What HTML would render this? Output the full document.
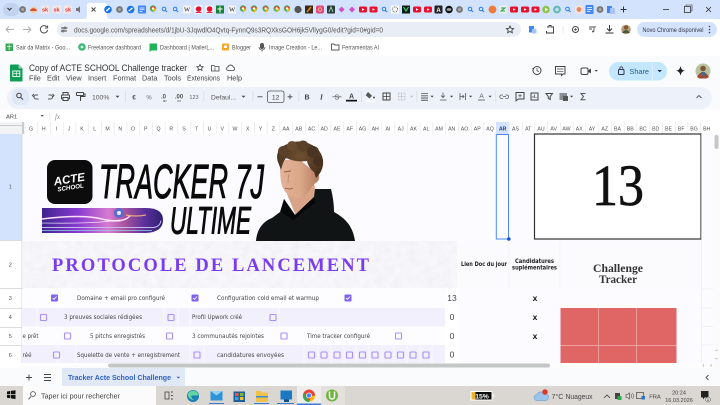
<!DOCTYPE html>
<html lang="fr"><head><meta charset="utf-8"><title>Copy of ACTE SCHOOL Challenge tracker</title>
<style>
html,body{margin:0;padding:0;width:720px;height:405px;overflow:hidden;background:#fff}
svg{display:block;filter:blur(.35px)}
text{font-family:"Liberation Sans",sans-serif}
.ch{font-size:5.2px;fill:#555;text-anchor:middle}
.m{font-size:7.3px;fill:#444}
.t{font-family:"DejaVu Sans","Liberation Sans",sans-serif;font-size:6.4px;fill:#444}
.b{font-size:6.8px;fill:#555}
.cb{fill:none;stroke:#a98ffa;stroke-width:1.1}
.ic{fill:none;stroke:#444;stroke-width:1}
.ig{fill:none;stroke:#666;stroke-width:1}
.hd{font-family:"DejaVu Sans","Liberation Sans",sans-serif;fill:#222;font-size:5.8px;font-weight:bold}
.se{font-family:"Liberation Serif",serif}
</style></head><body>
<svg width="720" height="405" viewBox="0 0 720 405" xmlns="http://www.w3.org/2000/svg">
<defs>
<g id="yt"><rect x="-4" y="-3" width="8" height="6" rx="1.5" fill="#e8112d"/><path d="M-1-1.3 1.600 0-1 1.300z" fill="#fff"/></g>
<g id="mp"><circle cy="-1" r="3.200" fill="#4caf50"/><path d="M-3-1a3.200 3.200 0 0 1 6 0z" fill="#ea4335"/><path d="M0-1 3-1 0 4z" fill="#fbbc04"/><circle cy="-1" r="1.200" fill="#fff"/></g>
<g id="se"><circle cx="-.5" cy="-.5" r="1.800" fill="none" stroke="#1a73e8" stroke-width=".9"/><path d="M1 1 2.600 2.600" stroke="#1a73e8" stroke-width=".9"/></g>
<g id="gl"><circle r="3.400" fill="#777"/><circle r="1.500" fill="#aaa"/></g>
<g id="sk"><rect x="-4" y="-4" width="8" height="8" fill="#f5e6e6"/><text x="0" y="2" font-size="5.500" font-weight="bold" fill="#d33" text-anchor="middle">sk</text></g>
<g id="gm"><rect x="-4" y="-4" width="8" height="8" fill="#fff"/><circle cy="-.5" r="2.800" fill="#e8112d"/><rect x="-3" y="2.400" width="6" height="1" fill="#e8112d"/></g>
<g id="bl"><circle r="3.800" fill="#1a73e8"/><path d="M-1.800 1.600 1.800-1.600" stroke="#fff" stroke-width="1.400"/></g>
<g id="w"><rect x="-4" y="-4" width="8" height="8" fill="#f3f3f3"/><text x="0" y="2.200" font-size="6.500" class="se" fill="#222" text-anchor="middle">W</text></g>
<pattern id="cols" x="24.600" y="0" width="12.750" height="400" patternUnits="userSpaceOnUse"><rect width=".6" height="400" fill="#dfe1e5"/></pattern>
<linearGradient id="cm" x1="0" x2="1" y1="0" y2="0"><stop offset="0" stop-color="#3d2590"/><stop offset=".3" stop-color="#8a3bd0"/><stop offset=".55" stop-color="#d77bd0"/><stop offset=".68" stop-color="#a9549f"/><stop offset=".85" stop-color="#5a2f9c"/><stop offset="1" stop-color="#2e2170"/></linearGradient>
<linearGradient id="face" x1="0" x2="1" y1="0" y2="0"><stop offset="0" stop-color="#e2b297"/><stop offset=".5" stop-color="#dca88a"/><stop offset="1" stop-color="#b57b60"/></linearGradient>
<radialGradient id="hairg" cx=".5" cy=".4" r=".7"><stop offset="0" stop-color="#6f4f30"/><stop offset="1" stop-color="#3f2c1c"/></radialGradient>
<filter id="paper" x="0" y="0" width="100%" height="100%"><feTurbulence type="fractalNoise" baseFrequency=".12" numOctaves="3" seed="4"/><feColorMatrix values=".12 0 0 0 .85  .12 0 0 0 .85  .08 0 0 0 .91  0 0 0 0 1"/></filter>
<g id="chk"><rect x="-3.500" y="-3.500" width="7" height="7" rx="1" fill="#7f62f0"/><path d="M-1.900 0-.5 1.400 2-1.500" stroke="#fff" stroke-width=".9" fill="none"/></g>
<g id="cbx"><rect x="-3" y="-3" width="6" height="6" rx=".8" class="cb"/></g>
</defs>

<!-- Tab strip -->
<rect width="720" height="19" fill="#d3e3fd"/>
<rect x="3" y="3" width="16" height="13" rx="6" fill="#c2d3f0"/>
<path d="M7.500 8l2 2 2-2" fill="none" stroke="#333" stroke-width="1.100"/>
<path d="M84 19q3 0 3-3V6q0-3 3-3h14q3 0 3 3v10q0 3 3 3z" fill="#fff"/>
<path d="M91.500 7.500l4 4M95.500 7.500l-4 4" stroke="#444" stroke-width="1"/>
<use href="#gl" x="22.600" y="9.500"/>
<circle cx="33.600" cy="10" r="3.400" fill="#f0c9a0"/><path d="M30 11a3.600 3.600 0 0 1 7 0z" fill="#d9502e"/>
<use href="#sk" x="45" y="9.500"/><use href="#sk" x="56.500" y="9.500"/><use href="#sk" x="68" y="9.500"/>
<path d="M76 8h2l2-2v7l-2-2h-2z" fill="#777"/>
<use href="#bl" x="108" y="9.500"/><use href="#gl" x="119.500" y="9.500"/><use href="#bl" x="130.600" y="9.500"/>
<rect x="138" y="5.500" width="8" height="8" rx="1" fill="#4285f4"/><path d="M139.500 8h5M139.500 9.700h5M139.500 11.400h3" stroke="#fff" stroke-width=".7"/>
<use href="#mp" x="153" y="9.500"/><use href="#se" x="164.500" y="9.500"/><use href="#se" x="175.600" y="9.500"/>
<use href="#w" x="187" y="9.500"/><use href="#gm" x="198.600" y="9.500"/><use href="#gm" x="209.600" y="9.500"/>
<rect x="216" y="5.500" width="8" height="8" fill="#188038"/><path d="M220 6.500v6M217.500 9h5" stroke="#fff" stroke-width="1"/>
<use href="#w" x="232" y="9.500"/><use href="#mp" x="243" y="9.500"/><use href="#mp" x="254" y="9.500"/><use href="#mp" x="265.600" y="9.500"/><use href="#mp" x="276.700" y="9.500"/><use href="#mp" x="287" y="9.500"/>
<circle cx="298" cy="9.500" r="3.600" fill="#555"/>
<rect x="305" y="5.500" width="8" height="8" fill="#3a2a14"/><path d="M307 12l4-5" stroke="#d18a2a" stroke-width="1.500"/>
<rect x="316" y="5.500" width="8" height="8" rx="2" fill="#e1457f"/><circle cx="320" cy="9.500" r="1.800" fill="none" stroke="#ffd28a" stroke-width=".8"/>
<rect x="327" y="5.500" width="8" height="8" rx="1" fill="#2d3a35"/><path d="M329 12l2-5 2 5" fill="none" stroke="#9fe3c2" stroke-width=".9"/>
<path d="M341.600 6.500l3 3-3 3-3-3z" fill="#d24fd0"/><path d="M352 6.500l3 3-3 3-3-3z" fill="#d24fd0"/>
<use href="#yt" x="363" y="9.500"/><use href="#yt" x="373.500" y="9.500"/><use href="#se" x="384.500" y="9.500"/>
<rect x="391" y="5.500" width="8" height="8" fill="#fff"/><circle cx="395" cy="9.500" r="2.600" fill="none" stroke="#666" stroke-width="1" stroke-dasharray="1 .8"/>
<rect x="402" y="5.500" width="8" height="8" fill="#0c1f17"/><path d="M403.500 7l2.500 4 2.500-4" fill="none" stroke="#3ddc84" stroke-width="1"/>
<use href="#yt" x="417" y="9.500"/><use href="#yt" x="428" y="9.500"/>
<rect x="434.500" y="5.500" width="8" height="8" rx="1" fill="#222"/><text x="438.500" y="11.800" font-size="6" font-weight="bold" fill="#fff" text-anchor="middle">A</text>
<circle cx="449" cy="9.500" r="3.800" fill="#111"/><ellipse cx="449" cy="9.500" rx="2.400" ry="1.400" fill="#aaa"/>
<use href="#gl" x="459.500" y="9.500"/><use href="#se" x="470.500" y="9.500"/><use href="#se" x="481.500" y="9.500"/>
<circle cx="492.500" cy="9.500" r="3.900" fill="#ee7a3c"/>
<rect x="499" y="5.500" width="8" height="8" fill="#e7f3ea"/><path d="M501 8h4l-4 3h4" fill="none" stroke="#2e9b4f" stroke-width="1"/>
<use href="#yt" x="514" y="9.500"/><use href="#yt" x="525" y="9.500"/><use href="#yt" x="535.500" y="9.500"/>
<circle cx="546" cy="9.500" r="3.800" fill="#8bc34a"/><path d="M545 7.500l3 2-3 2z" fill="#fff"/>
<circle cx="557" cy="9.500" r="3.900" fill="#66b8b8"/><circle cx="557" cy="9.500" r="1.800" fill="#bfe6e6"/>
<use href="#se" x="568" y="9.500"/>
<rect x="575" y="5.500" width="8" height="8" fill="#f6e2d8"/><circle cx="579" cy="9.500" r="2.400" fill="#e08a6a"/>
<rect x="585.500" y="5" width="8" height="9" rx="1" fill="#4285f4"/><path d="M587 7.500h5M587 9.500h5M587 11.500h3.500" stroke="#fff" stroke-width=".8"/>
<use href="#gl" x="600" y="9.500"/>
<rect x="607" y="6" width="5" height="7" rx=".5" fill="#4285f4"/><rect x="610" y="8" width="5" height="6" rx=".5" fill="#a9c5f5"/>
<path d="M620.500 9.500h6M623.500 6.500v6" stroke="#333" stroke-width="1"/>
<path d="M663 9.500h6" stroke="#333" stroke-width=".8"/>
<rect x="684.500" y="6.500" width="6" height="6" fill="none" stroke="#333" stroke-width=".8"/><path d="M686 6V5h6v6h-1" fill="none" stroke="#333" stroke-width=".6"/>
<path d="M706 7l5 5M711 7l-5 5" stroke="#333" stroke-width=".8"/>

<!-- Address bar -->
<rect y="19" width="720" height="19" fill="#fff"/>
<path d="M6 29.500h8M6 29.500l3-3M6 29.500l3 3" style="stroke:#b0b0b0;fill:none"/>
<path d="M31 29.500h-8M31 29.500l-3-3M31 29.500l-3 3" style="stroke:#b0b0b0;fill:none"/>
<path d="M47 27a3.700 3.700 0 1 0 .7 3M47.600 25.500V28h-2.500" fill="none" stroke="#555" stroke-width="1"/>
<rect x="57" y="22" width="464" height="15" rx="7.500" fill="#e9eef6"/>
<path d="M61 28h3M66 28h1.500M61 31h1M64 31h3" stroke="#444" stroke-width="1"/><circle cx="65" cy="28" r="1" fill="none" stroke="#444" stroke-width=".7"/><circle cx="63" cy="31" r="1" fill="none" stroke="#444" stroke-width=".7"/>
<text x="74" y="32.500" font-size="7.600" fill="#555" textLength="309" lengthAdjust="spacingAndGlyphs">docs.google.com/spreadsheets/d/1jbU-3JqwdlO4Qvtq-FynnQ9s3RQXksGOH6jk5VllygG0/edit?gid=0#gid=0</text>
<path d="M510 26l1.100 2.300 2.500.3-1.800 1.700.5 2.500-2.300-1.300-2.300 1.300.5-2.500-1.800-1.700 2.500-.3z" fill="none" stroke="#444" stroke-width=".9"/>
<rect x="529" y="26" width="5" height="6.500" rx=".5" fill="#4285f4"/><rect x="532" y="29" width="4.500" height="4.500" rx=".5" fill="#a9c5f5"/>
<path d="M547 27h2v-1.500h2V27h2.500v6h-7v-2" fill="none" stroke="#333" stroke-width=".9"/>
<path d="M563 26v7" stroke="#dfe3ea" stroke-width=".8"/>
<circle cx="575.500" cy="29.500" r="3" class="ic"/><path d="M575.500 28v3M574 29.500h3" stroke="#444" stroke-width=".7"/>
<path d="M589 27h5M589 29h3" stroke="#555" stroke-width="1.100"/><path d="M594 31.500V27l2-.3" fill="none" stroke="#555" stroke-width=".9"/><circle cx="593" cy="31.500" r="1" fill="#555"/>
<path d="M609.500 25v5.500M607 28.500l2.500 2.500 2.500-2.500M605.500 33h8" fill="none" stroke="#333" stroke-width="1"/>
<circle cx="626" cy="29.500" r="4.800" fill="#b89a75"/><path d="M622 33q4-6 8 0z" fill="#3f5b3a"/><circle cx="626" cy="27.500" r="2" fill="#7b5534"/>
<rect x="637" y="22" width="80" height="15" rx="7.500" fill="#d3e3fd"/>
<text x="642.500" y="32" font-size="6.800" fill="#334" textLength="61" lengthAdjust="spacingAndGlyphs">Novo Chrome disponível</text>
<circle cx="709.500" cy="26.500" r=".8" fill="#444"/><circle cx="709.500" cy="29.500" r=".8" fill="#444"/><circle cx="709.500" cy="32.500" r=".8" fill="#444"/>

<!-- Bookmarks -->
<rect y="38" width="720" height="18" fill="#fff"/>
<rect x="5.500" y="43.500" width="7.500" height="7.500" fill="#34a853"/><path d="M9.200 44.500v5.500M7 46.500h4.500" stroke="#fff" stroke-width=".8"/>
<text x="16" y="49.500" class="b" textLength="54" lengthAdjust="spacingAndGlyphs">Sair da Matrix - Goo...</text>
<circle cx="82" cy="47" r="3.800" fill="#3cb878"/><circle cx="82" cy="47" r="1.400" fill="#d9f5e4"/>
<text x="88" y="49.500" class="b" textLength="53" lengthAdjust="spacingAndGlyphs">Freelancer dashboard</text>
<path d="M149.500 43.500h7.500v7h-5.500l-2 1.500z" fill="#1fb45a"/>
<text x="160" y="49.500" class="b" textLength="54" lengthAdjust="spacingAndGlyphs">Dashboard | MailerL...</text>
<rect x="222" y="43.500" width="7" height="7" rx="1" fill="#f5a623"/><rect x="224" y="45.500" width="3" height="2.500" fill="#fff"/>
<text x="232" y="49.500" class="b" textLength="19" lengthAdjust="spacingAndGlyphs">Blogger</text>
<rect x="260" y="43" width="4" height="6" rx="2" fill="#555"/><path d="M259 47a3 3 0 0 0 6 0M262 50v1.500" fill="none" stroke="#555" stroke-width=".8"/>
<text x="269" y="49.500" class="b" textLength="53" lengthAdjust="spacingAndGlyphs">Image Creation - Le...</text>
<path d="M331.500 44h2.500l1 1h4v5h-7.500z" fill="none" stroke="#555" stroke-width=".9"/>
<text x="342" y="49.500" class="b" textLength="37" lengthAdjust="spacingAndGlyphs">Ferramentas AI</text>

<!-- Docs header -->
<rect y="56" width="720" height="54" fill="#f9fbfd"/>
<path d="M10 65.500q0-1 1-1h7.500l4 4v12q0 1-1 1H11q-1 0-1-1z" fill="#0f9d58"/><path d="M18.500 64.500v4h4z" fill="#87ceac"/><rect x="12.800" y="71" width="7" height="5.500" fill="none" stroke="#fff" stroke-width=".9"/><path d="M16.300 71v5.500M12.800 73.700h7" stroke="#fff" stroke-width=".7"/>
<text x="29" y="71" font-size="9.400" fill="#333" textLength="158" lengthAdjust="spacingAndGlyphs">Copy of ACTE SCHOOL Challenge tracker</text>
<path d="M200 64.500l1 2 2.200.3-1.600 1.500.4 2.200-2-1.100-2 1.100.4-2.200-1.600-1.500 2.200-.3z" fill="none" stroke="#444" stroke-width=".8"/>
<path d="M211.500 65.500h2.500l1 1h4v4.500h-7.500z" fill="none" stroke="#444" stroke-width=".8"/><path d="M215 67.500v3" stroke="#444" stroke-width=".7"/>
<path d="M228 70.500a2 2 0 0 1 0-3.800 2.800 2.800 0 0 1 5.200.3 1.800 1.800 0 0 1 0 3.500z" fill="none" stroke="#444" stroke-width=".8"/>
<text x="29" y="80.500" class="m">File</text><text x="47" y="80.500" class="m">Edit</text><text x="66" y="80.500" class="m">View</text><text x="88" y="80.500" class="m">Insert</text><text x="113" y="80.500" class="m">Format</text><text x="142" y="80.500" class="m">Data</text><text x="164" y="80.500" class="m">Tools</text><text x="187" y="80.500" class="m" textLength="33" lengthAdjust="spacingAndGlyphs">Extensions</text><text x="227" y="80.500" class="m">Help</text>
<circle cx="537" cy="70.500" r="4" fill="none" stroke="#444" stroke-width="1"/><path d="M537 68v2.800l2 1" fill="none" stroke="#444" stroke-width=".8"/><path d="M532 68l1.300 1.500 1.200-1.500z" fill="#444"/>
<path d="M555.500 66.500h9.500v7.500h-2l-1.500 1.500v-1.500h-6z" fill="none" stroke="#444" stroke-width="1"/><path d="M557 69h6.500M557 71.300h6.500" stroke="#444" stroke-width=".7"/>
<rect x="581" y="68" width="7" height="6.500" rx="1.500" fill="none" stroke="#444" stroke-width="1"/><path d="M588 70.500l3-2v5l-3-2z" fill="#444"/>
<path d="M594.500 70l1.700 1.800 1.700-1.800z" fill="#444"/>
<rect x="609" y="62" width="58" height="18.500" rx="9.200" fill="#c2e7ff"/><path d="M652.500 62v18.500" stroke="#e4f3fc" stroke-width=".8"/>
<rect x="618.500" y="69.500" width="5.500" height="5" rx=".8" fill="none" stroke="#335" stroke-width="1"/><path d="M619.800 69.500v-1.200a1.500 1.500 0 0 1 3 0v1.200" fill="none" stroke="#335" stroke-width=".8"/>
<text x="629.500" y="73.800" font-size="7.300" fill="#1e5a8a">Share</text>
<path d="M657.500 70l2.200 2.200 2.200-2.200z" fill="#223"/>
<path d="M680.500 66q.7 4.300 4.300 4.800-3.600.5-4.300 4.800-.7-4.300-4.300-4.800 3.600-.5 4.300-4.800z" fill="#222"/>
<circle cx="703" cy="71" r="7.500" fill="#b9c49f"/><path d="M697 77q6-10 12 0l-2.500 1.500h-7z" fill="#a04a30"/><circle cx="703" cy="68.500" r="2.800" fill="#7d5836"/><path d="M701 72h4v4h-4z" fill="#4c6b8a"/>

<!-- Toolbar -->
<rect x="7" y="87" width="705" height="22" rx="11" fill="#edf2fa"/>
<rect x="12" y="89" width="17" height="16" rx="6" fill="#dfe8f6"/>
<circle cx="19" cy="95.500" r="2.300" fill="none" stroke="#444" stroke-width="1"/><path d="M20.700 97.300l2.300 2.300" stroke="#444" stroke-width="1"/>
<path d="M38.500 99h-2.500a2 2 0 0 1 0-4h2M34 94l-1.500 1.500L34 97" class="ic" style="stroke:#555"/>
<path d="M48 99h2.500a2 2 0 0 0 0-4h-2M52.500 94l1.500 1.500-1.500 1.500" class="ic" style="stroke:#555"/>
<rect x="61.500" y="95" width="8" height="4" rx=".8" class="ic"/><rect x="63" y="92.500" width="5" height="2.500" class="ic"/><rect x="63" y="97.500" width="5" height="3" class="ic" style="fill:#edf2fa"/>
<rect x="76.500" y="92.500" width="7" height="3" rx=".5" class="ic"/><path d="M83.500 94h1.500v2.500h-4.500v2M80.500 98.500v2.500" class="ic"/>
<text x="92" y="99.500" font-size="6.800" fill="#555">100%</text><path d="M115.500 95.800l2 2 2-2z" fill="#444"/>
<rect x="125" y="91" width=".7" height="11" fill="#d5d9e0"/>
<text x="134" y="99.500" font-size="6.500" font-weight="bold" fill="#555" text-anchor="middle">€</text>
<text x="149" y="99.500" font-size="6" fill="#666" text-anchor="middle">%</text>
<text x="163.500" y="98.500" font-size="6" font-weight="bold" fill="#555" text-anchor="middle">.0</text><path d="M163 101h4M165 100l-1.500 1 1.500 1" stroke="#555" stroke-width=".5" fill="none"/>
<text x="179" y="98.500" font-size="6" font-weight="bold" fill="#555" text-anchor="middle">.00</text><path d="M177 101h4" stroke="#555" stroke-width=".7"/>
<text x="194" y="99" font-size="5.600" fill="#666" text-anchor="middle">123</text>
<rect x="203.500" y="91" width=".7" height="11" fill="#d5d9e0"/>
<text x="211" y="99.300" font-size="6.800" fill="#555" textLength="25" lengthAdjust="spacingAndGlyphs">Defaul...</text><path d="M241.500 95.800l2 2 2-2z" fill="#444"/>
<rect x="252.500" y="91" width=".7" height="11" fill="#d5d9e0"/>
<path d="M257.500 96.800h5" stroke="#444" stroke-width=".9"/>
<rect x="267.500" y="91" width="16.500" height="11.500" rx="2" fill="none" stroke="#555" stroke-width=".8"/>
<text x="275.700" y="99.300" font-size="6.800" fill="#444" text-anchor="middle">12</text>
<path d="M287.500 96.800h5M290 94.300v5" stroke="#444" stroke-width=".9"/>
<rect x="298.500" y="91" width=".7" height="11" fill="#d5d9e0"/>
<text x="307" y="99.500" font-size="7" font-weight="bold" fill="#444" text-anchor="middle">B</text>
<text x="321.500" y="99.500" font-size="7.500" font-style="italic" font-weight="bold" class="se" fill="#444" text-anchor="middle">I</text>
<text x="337" y="99.500" font-size="7" fill="#555" text-anchor="middle">S</text><path d="M332.500 96.800h9" stroke="#555" stroke-width=".7"/>
<text x="351.500" y="98.500" font-size="7" font-weight="bold" fill="#444" text-anchor="middle">A</text><rect x="346" y="99.800" width="11" height="1.700" fill="#111"/>
<rect x="361" y="91" width=".7" height="11" fill="#d5d9e0"/>
<path d="M368 92l4 3.800-2.500 2.700-3.800-3.200z" fill="#555"/><circle cx="374" cy="97.500" r="1" fill="#555"/><rect x="366.500" y="99.800" width="9" height="1.800" fill="#fff"/>
<rect x="383" y="93" width="7" height="7" class="ic"/><path d="M386.500 93v7M383 96.500h7" class="ic" style="stroke-width:.8"/>
<rect x="398.500" y="93" width="6.500" height="7" fill="none" stroke="#bbb" stroke-width=".8" stroke-dasharray="1.500 .8"/><path d="M401.700 93v7M398.500 96.500h6.500" stroke="#bbb" stroke-width=".6"/><path d="M410 95.800l1.700 1.800 1.700-1.800z" fill="#bbb"/>
<rect x="416.500" y="91" width=".7" height="11" fill="#d5d9e0"/>
<path d="M421 93.500h7M421 95.300h7M421 97.100h7M421 98.900h7M421 100.500h7" stroke="#555" stroke-width=".7"/><path d="M430.500 95.800l1.600 1.700 1.600-1.700z" fill="#444"/>
<path d="M443 92.500v5M441 95.500l2 2 2-2M440 100h6.500" fill="none" stroke="#555" stroke-width=".8"/><path d="M450 95.800l1.600 1.700 1.600-1.700z" fill="#444"/>
<path d="M460 93v7M465.500 93v7M460 96.500h4M462.500 95l1.500 1.500-1.500 1.500" fill="none" stroke="#555" stroke-width=".8"/><path d="M469 95.800l1.600 1.700 1.600-1.700z" fill="#444"/>
<text x="481.500" y="98" font-size="6.500" fill="#555" text-anchor="middle">A</text><path d="M478 100h7" stroke="#555" stroke-width=".8"/><path d="M488.500 95.800l1.600 1.700 1.600-1.700z" fill="#444"/>
<rect x="495.500" y="91" width=".7" height="11" fill="#d5d9e0"/>
<path d="M503 95h-1.500a1.700 1.700 0 0 0 0 3.400H503M505.500 95h1.500a1.700 1.700 0 0 1 0 3.400h-1.500M503 96.700h3" fill="none" stroke="#555" stroke-width=".8"/>
<path d="M516 92.500h8v6.500h-5.500l-2.500 1.800z" class="ic"/><path d="M520 94v3.500M518.300 95.800h3.500" stroke="#444" stroke-width=".7"/>
<rect x="531" y="93" width="7" height="7" class="ic"/><path d="M533 98v-2M534.500 98v-3.500M536 98v-1" stroke="#444" stroke-width=".7"/>
<path d="M546 93.500h6.500l-2.300 3v3l-1.900-1v-2z" class="ic"/>
<rect x="559.500" y="93" width="7.500" height="7" fill="#8a8f95"/><rect x="563" y="96" width="5" height="5" fill="#555"/><path d="M570 95.800l1.600 1.700 1.600-1.700z" fill="#444"/>
<path d="M585.500 93.500h-4.500l2.500 3-2.500 3.300h4.500" fill="none" stroke="#555" stroke-width="1"/>
<path d="M696.500 98l2.500-2.500 2.500 2.500" fill="none" stroke="#555" stroke-width=".9"/>

<!-- formula bar -->
<rect y="110" width="720" height="12" fill="#fff"/>
<text x="6" y="118.500" font-size="5.800" fill="#444">AR1</text>
<path d="M40.500 115l1.700 1.800 1.700-1.800z" fill="#555"/>
<rect x="49.500" y="112.500" width=".6" height="8" fill="#ddd"/>
<text x="55" y="119" font-size="7" font-style="italic" class="se" fill="#888">fx</text>
<rect y="122" width="720" height=".6" fill="#d8dbe0"/>

<!-- col header -->
<rect y="122" width="720" height="13" fill="#fff"/>
<rect x="24" y="122" width="689" height="13" fill="url(#cols)"/>
<rect x="496" y="122" width="12.750" height="13" fill="#d3e3fd"/>
<rect x="0" y="122" width="22" height="13" fill="#f2f3f5"/><rect x="0" y="125" width="22" height="1" fill="#ccc"/><rect x="22" y="122" width="2" height="13" fill="#c8cbd0"/>
<g>
<text class="ch" x="31" y="130.500">G</text><text class="ch" x="43.700" y="130.500">H</text><text class="ch" x="56.500" y="130.500">I</text><text class="ch" x="69.200" y="130.500">J</text><text class="ch" x="82" y="130.500">K</text><text class="ch" x="94.700" y="130.500">L</text><text class="ch" x="107.500" y="130.500">M</text><text class="ch" x="120.200" y="130.500">N</text><text class="ch" x="133" y="130.500">O</text><text class="ch" x="145.700" y="130.500">P</text><text class="ch" x="158.500" y="130.500">Q</text><text class="ch" x="171.200" y="130.500">R</text><text class="ch" x="184" y="130.500">S</text><text class="ch" x="196.700" y="130.500">T</text><text class="ch" x="209.500" y="130.500">U</text><text class="ch" x="222.200" y="130.500">V</text><text class="ch" x="235" y="130.500">W</text><text class="ch" x="247.700" y="130.500">X</text><text class="ch" x="260.500" y="130.500">Y</text><text class="ch" x="273.200" y="130.500">Z</text><text class="ch" x="286" y="130.500">AA</text><text class="ch" x="298.700" y="130.500">AB</text><text class="ch" x="311.500" y="130.500">AC</text><text class="ch" x="324.200" y="130.500">AD</text><text class="ch" x="337" y="130.500">AE</text><text class="ch" x="349.700" y="130.500">AF</text><text class="ch" x="362.500" y="130.500">AG</text><text class="ch" x="375.200" y="130.500">AH</text><text class="ch" x="388" y="130.500">AI</text><text class="ch" x="400.700" y="130.500">AJ</text><text class="ch" x="413.500" y="130.500">AK</text><text class="ch" x="426.200" y="130.500">AL</text><text class="ch" x="439" y="130.500">AM</text><text class="ch" x="451.700" y="130.500">AN</text><text class="ch" x="464.500" y="130.500">AO</text><text class="ch" x="477.200" y="130.500">AP</text><text class="ch" x="490" y="130.500">AQ</text><text class="ch" x="502.700" y="130.500" style="font-weight:bold;fill:#1f3f7a">AR</text><text class="ch" x="515.500" y="130.500">AS</text><text class="ch" x="528.200" y="130.500">AT</text><text class="ch" x="541" y="130.500">AU</text><text class="ch" x="553.700" y="130.500">AV</text><text class="ch" x="566.500" y="130.500">AW</text><text class="ch" x="579.200" y="130.500">AX</text><text class="ch" x="592" y="130.500">AY</text><text class="ch" x="604.700" y="130.500">AZ</text><text class="ch" x="617.500" y="130.500">BA</text><text class="ch" x="630.200" y="130.500">BB</text><text class="ch" x="643" y="130.500">BC</text><text class="ch" x="655.700" y="130.500">BD</text><text class="ch" x="668.500" y="130.500">BE</text><text class="ch" x="681.200" y="130.500">BF</text><text class="ch" x="694" y="130.500">BG</text><text class="ch" x="706.700" y="130.500">BH</text>
</g>

<!-- Grid -->
<rect x="22" y="134" width="691" height="229" fill="#fcfbff"/>
<rect x="0" y="134" width="22" height="229" fill="#fff"/>
<rect x="0" y="134" width="22" height="106" fill="#d3e3fd"/>
<rect x="21.600" y="134" width=".7" height="229" fill="#cfd2d6"/>
<path d="M0 240.500h22M0 288.500h22M0 308.500h22M0 327.500h22M0 345.500h22" stroke="#cfd2d6" stroke-width=".7"/>
<text class="ch" x="10.300" y="188.500" style="font-size:5.500px">1</text><text class="ch" x="10.300" y="266.500" style="font-size:5.500px">2</text><text class="ch" x="10.300" y="300" style="font-size:5.500px">3</text><text class="ch" x="10.300" y="319" style="font-size:5.500px">4</text><text class="ch" x="10.300" y="338" style="font-size:5.500px">5</text><text class="ch" x="10.300" y="357" style="font-size:5.500px">6</text>

<!-- Banner logo -->
<rect x="47" y="160" width="45.500" height="44" rx="8" fill="#0c0c0c"/>
<g transform="translate(70,184) rotate(-9)" fill="#fff" text-anchor="middle"><text y="-1" font-size="11.500" font-weight="bold" font-style="italic">ACTE</text><text y="5.500" font-size="6.200" font-weight="bold" font-style="italic">SCHOOL</text></g>
<text x="99" y="198" font-size="48" font-style="italic" fill="#0a0a0a" stroke="#0a0a0a" stroke-width="1" textLength="165" lengthAdjust="spacingAndGlyphs">TRACKER 7J</text>
<text x="170" y="233.500" font-size="38" font-style="italic" fill="#0a0a0a" stroke="#0a0a0a" stroke-width="1" textLength="81" lengthAdjust="spacingAndGlyphs">ULTIME</text>
<!-- comet -->
<path d="M42 208h104q17 0 17 12t-17 13H42z" fill="url(#cm)"/>
<path d="M42 227.500h112q6-1 7-7" fill="none" stroke="#c7b8ee" stroke-width=".9"/>
<path d="M42 230.500h110" stroke="#8fd0e6" stroke-width=".7"/>
<path d="M42 219q40-5 60 0t28-3" fill="none" stroke="#fbe0f7" stroke-width="1.500"/>
<path d="M42 223q50 1 78-3" fill="none" stroke="#fff" stroke-width=".8" opacity=".8"/>
<path d="M126 215q10 2 20 0" fill="none" stroke="#f6b07a" stroke-width="1.200" opacity=".9"/>
<circle cx="119" cy="213" r="5" fill="#5a6bd0"/><circle cx="119" cy="213" r="2" fill="#e9e8ff"/>
<!-- person -->
<path d="M287 194L296 216 317 199 313 178z" fill="#d9a388"/>
<path d="M256 241C257 230 262 222 272 218L280 212 284 199 295 215 314 197 315 189 331 189C333 197 334 205 334 212 345 218 353 226 355 241Z" fill="#111415"/>
<path d="M284 199l-3 13 12 8 22-17-1-6-19 18z" fill="#060708"/>
<path d="M281 165C279 172 281 184 283 188 286 194 291 198 296 198 303 198 309 193 312 186L317 182C320 180 320 173 316 172L312 170 300 160 285 160Z" fill="url(#face)"/>
<path d="M278 162C275 153 280 146 288 144 295 140 305 141 312 145 320 149 324 157 323 165 322 171 319 175 316 178L314 172C311 170 308 166 307 161 300 162 292 161 286 158 283 162 282 166 281 170Z" fill="url(#hairg)"/>
<circle cx="283" cy="151" r="5" fill="#5c4129"/><circle cx="292" cy="146" r="5" fill="#6a4a2e"/><circle cx="303" cy="146" r="5.500" fill="#5c4129"/><circle cx="313" cy="152" r="6" fill="#4a3423"/><circle cx="318" cy="161" r="5" fill="#463120"/>
<path d="M284 172l7-1M285 188q5 2 8 0" stroke="#8b5a48" stroke-width=".9" fill="none"/>
<path d="M289 174q-1 5-1 9" stroke="#c48f75" stroke-width="1" fill="none"/>

<!-- Protocole -->
<rect x="22" y="241" width="435" height="47" filter="url(#paper)"/>
<text x="52" y="271" font-size="18.500" font-weight="bold" fill="#7a3cf0" textLength="317" class="se">PROTOCOLE DE LANCEMENT</text>

<!-- Right headers -->
<rect x="457" y="241" width="245" height="47" fill="#fbfbfe"/>
<rect x="508.500" y="241" width=".7" height="47" fill="#f2f1f8"/><rect x="559.500" y="241" width=".7" height="47" fill="#f2f1f8"/>
<text x="461" y="266" class="hd" textLength="46" lengthAdjust="spacingAndGlyphs">Lien Doc du jour</text>
<text x="515" y="263" class="hd" textLength="39" lengthAdjust="spacingAndGlyphs">Candidatures</text>
<text x="512" y="269.500" class="hd" textLength="45" lengthAdjust="spacingAndGlyphs">suplémentaires</text>
<text x="593" y="272" font-size="11.500" font-weight="bold" fill="#333" class="se" textLength="50" lengthAdjust="spacingAndGlyphs">Challenge</text>
<text x="599" y="283" font-size="11.500" font-weight="bold" fill="#333" class="se" textLength="38" lengthAdjust="spacingAndGlyphs">Tracker</text>

<!-- 13 box -->
<rect x="534.500" y="134" width="166.500" height="105" fill="#fff" stroke="#333" stroke-width="1.200"/>
<text x="592" y="205" font-size="58" fill="#111" stroke="#111" stroke-width=".7" class="se" textLength="52" lengthAdjust="spacingAndGlyphs">13</text>
<!-- selection -->
<rect x="496.300" y="134.500" width="12.200" height="104.500" fill="none" stroke="#4d8af5" stroke-width="1"/>
<circle cx="508.800" cy="239" r="1.800" fill="#1a55d8"/>

<!-- rows -->
<rect x="22" y="289" width="423" height="19" fill="#fdfcff"/>
<rect x="22" y="308" width="423" height="18.500" fill="#f3f0fe"/>
<rect x="22" y="327" width="423" height="18" fill="#fdfcff"/>
<rect x="22" y="345" width="423" height="18" fill="#f3f0fe"/>
<rect x="445" y="289" width="14" height="74" fill="#fff"/>
<path d="M63 289v19M165 289v19M203 289v19M37 308v19M164 308v19M178 308v19M190 308v19M279 308v19M58 345v18M76 345v18M190 345v18M204 345v18M304 345v18M318 345v18M331 345v18M344 345v18M356 345v18M369 345v18M382 345v18M394 345v18M407 345v18M420 345v18M432 345v18" stroke="#fff" stroke-width=".6"/>

<use href="#chk" x="54.500" y="298"/><use href="#chk" x="195" y="298"/><use href="#chk" x="348" y="298"/>
<text x="77" y="300" class="t" textLength="88" lengthAdjust="spacingAndGlyphs">Domaine + email pro configuré</text>
<text x="217" y="300" class="t" textLength="102" lengthAdjust="spacingAndGlyphs">Configuration cold email et warmup</text>
<use href="#cbx" x="43.500" y="317.500"/><use href="#cbx" x="171" y="317.500"/><use href="#cbx" x="273" y="317.500"/>
<text x="64" y="319" class="t" textLength="78" lengthAdjust="spacingAndGlyphs">3 preuves sociales rédigées</text>
<text x="192" y="319" class="t" textLength="50" lengthAdjust="spacingAndGlyphs">Profil Upwork créé</text>
<text x="22.500" y="338" class="t" textLength="16" lengthAdjust="spacingAndGlyphs">e prêt</text>
<use href="#cbx" x="67.500" y="336"/><use href="#cbx" x="169.500" y="336"/><use href="#cbx" x="284" y="336"/><use href="#cbx" x="398.500" y="336"/>
<text x="90" y="338" class="t" textLength="55" lengthAdjust="spacingAndGlyphs">5 pitchs enregistrés</text>
<text x="192" y="338" class="t" textLength="72" lengthAdjust="spacingAndGlyphs">3 communautés rejointes</text>
<text x="307" y="338" class="t" textLength="63" lengthAdjust="spacingAndGlyphs">Time tracker configuré</text>
<text x="22.500" y="357" class="t" textLength="9" lengthAdjust="spacingAndGlyphs">réé</text>
<use href="#cbx" x="56.500" y="355"/><use href="#cbx" x="197" y="355"/>
<text x="77" y="357" class="t" textLength="103" lengthAdjust="spacingAndGlyphs">Squelette de vente + enregistrement</text>
<text x="217" y="357" class="t" textLength="67" lengthAdjust="spacingAndGlyphs">candidatures envoyées</text>
<use href="#cbx" x="311.500" y="355"/><use href="#cbx" x="324" y="355"/><use href="#cbx" x="337" y="355"/><use href="#cbx" x="349.500" y="355"/><use href="#cbx" x="362.500" y="355"/><use href="#cbx" x="375" y="355"/><use href="#cbx" x="388" y="355"/><use href="#cbx" x="400.500" y="355"/><use href="#cbx" x="413" y="355"/><use href="#cbx" x="426" y="355"/>
<text x="452" y="301" font-size="8.500" fill="#444" text-anchor="middle">13</text><text x="452" y="320" font-size="8.500" fill="#444" text-anchor="middle">0</text><text x="452" y="339" font-size="8.500" fill="#444" text-anchor="middle">0</text><text x="452" y="357.500" font-size="8.500" fill="#444" text-anchor="middle">0</text>
<text x="535" y="301" font-size="8.500" font-weight="bold" fill="#111" text-anchor="middle">x</text><text x="535" y="320" font-size="8.500" font-weight="bold" fill="#111" text-anchor="middle">x</text><text x="535" y="339" font-size="8.500" font-weight="bold" fill="#111" text-anchor="middle">x</text>
<rect x="560.500" y="308" width="116" height="55" fill="#e06666"/>
<path d="M598.500 308v55M636.500 308v55M560.500 345.500h116" stroke="#f3b4b4" stroke-width=".7"/>
<path d="M701.500 134v229M701.500 289h12M701.500 308h12M701.500 326.500h12M701.500 345h12" stroke="#e9e8ee" stroke-width=".6"/>

<!-- scrollbars -->
<rect x="713" y="134" width="7" height="234" fill="#fbfbfb"/><rect x="714.500" y="135" width="4" height="14" rx="2" fill="#c4c7c5"/>
<path d="M715.500 351l1-1.200 1 1.200M715.500 358l1 1.200 1-1.200" stroke="#888" stroke-width=".5" fill="none"/>
<rect x="22" y="363" width="691" height="5" fill="#fdfdfd"/><rect x="108" y="363.500" width="442" height="4" rx="2" fill="#c4c7c5"/>
<path d="M704 364l-1.200 1.500 1.200 1.500M710.500 364l1.200 1.500-1.200 1.500" stroke="#888" stroke-width=".5" fill="none"/>

<!-- sheet tabs -->
<rect y="368" width="720" height="18" fill="#f9fbfd"/>
<path d="M26 377.500h6M29 374.500v6M44 374.500h7M44 377.500h7M44 380.500h7" stroke="#444" stroke-width=".9"/>
<rect x="62" y="368" width="123" height="18" fill="#e1e9f7"/>
<text x="68" y="380" font-size="7.400" font-weight="bold" fill="#2f62c4" textLength="103" lengthAdjust="spacingAndGlyphs">Tracker Acte School Challenge</text>
<path d="M176.500 376.800l1.800 1.800 1.800-1.800z" fill="#2f62c4"/>
<path d="M708.500 375l-2.500 2.500 2.500 2.500" fill="none" stroke="#555" stroke-width=".9"/>

<!-- Taskbar -->
<rect y="386" width="720" height="19" fill="#dad6d2"/>
<path d="M7 391.500l3.300-.5v3.300H7zM11 390.900l4.500-.7v4.100H11zM7 395h3.300v3.300l-3.300-.5zM11 395h4.500v4.100l-4.500-.7z" fill="#111"/>
<rect x="23" y="386" width="133" height="19" fill="#fbfbfb"/>
<circle cx="33" cy="394" r="2.400" fill="none" stroke="#444" stroke-width=".8"/><path d="M31 396.500l-2.500 2.800" stroke="#444" stroke-width=".8"/>
<text x="41" y="398.500" font-size="7.600" fill="#444" textLength="79" lengthAdjust="spacingAndGlyphs">Taper ici pour rechercher</text>
<rect x="165" y="392" width="4" height="7" fill="none" stroke="#444" stroke-width=".8"/><path d="M171 392h1.800M171 395.500h1.800M171 399h1.800" stroke="#444" stroke-width=".9"/>
<circle cx="193" cy="396" r="6" fill="#1a7fb5"/><path d="M188 394a5.500 5.500 0 0 1 10.500 1.500h-7a2.500 2.500 0 0 0 5 2q-3 3.500-6 1.500-3-2-2.500-5z" fill="#63d6a0"/>
<rect x="210.500" y="391" width="12" height="9.500" fill="#2d94d8"/><path d="M210.500 391l6 4.500 6-4.500" fill="#8fd0f5"/><rect x="209" y="403" width="15" height="1" fill="#3a7bd5"/>
<rect x="233.500" y="391.500" width="11.500" height="10.500" fill="#1d5f9a"/><rect x="235" y="393" width="3.500" height="3" fill="#e55a3a"/><rect x="240" y="393" width="3.500" height="3" fill="#7bb83a"/><rect x="235" y="397" width="3.500" height="3" fill="#3aa0e5"/><rect x="240" y="397" width="3.500" height="3" fill="#f3c32b"/>
<path d="M256 391h5l1.500 1.500h5.500v9.500h-12z" fill="#f0c14b"/><rect x="256" y="396" width="12" height="1.500" fill="#3d8bd0"/><rect x="254" y="403" width="15" height="1" fill="#3a7bd5"/>
<rect x="280.500" y="390.500" width="11.500" height="9" fill="#1a79c2"/><rect x="284" y="399.500" width="5" height="2.500" fill="#0d4f85"/><rect x="277" y="403" width="17" height="1" fill="#3a7bd5"/>
<rect x="297" y="386" width="24" height="19" fill="#efedeb"/>
<circle cx="309" cy="395.500" r="6" fill="#ea4335"/><path d="M304 392.500l3 6 2.800 3-.8.500a6 6 0 0 1-5-9.500z" fill="#34a853"/><path d="M315 395.500a6 6 0 0 1-6 6l3-5.500z" fill="#fbbc04"/><circle cx="309" cy="395.500" r="2.900" fill="#fff"/><circle cx="309" cy="395.500" r="2.200" fill="#4285f4"/><rect x="297" y="403.500" width="24" height="1.500" fill="#3a7bd5"/>
<rect x="321" y="386" width="24" height="19" fill="#e4e1dd"/>
<circle cx="332" cy="395.500" r="6" fill="#6eb43f"/><path d="M329.500 391.500v5a2.500 2.500 0 0 0 5 0v-5" fill="none" stroke="#fff" stroke-width="1.500"/>
<rect x="470.500" y="391" width="22" height="9.500" fill="#fff"/><rect x="471.500" y="392" width="20" height="7.500" fill="#0c0c0c"/><rect x="471.500" y="392" width="4" height="7.500" fill="#f0b429"/>
<text x="482" y="398.500" font-size="6.800" font-weight="bold" fill="#fff" text-anchor="middle">15%</text><rect x="493.500" y="394" width="1" height="3.500" fill="#fff"/>
<path d="M537 400.500a3 3 0 0 1 0-6 4 4 0 0 1 7-1 3.500 3.500 0 0 1 2 7z" fill="#9cc3ea" stroke="#5b8ed0" stroke-width=".5"/><circle cx="545" cy="392" r="2.800" fill="#d93a2b"/>
<text x="551.500" y="399" font-size="7" fill="#444">7°C</text><text x="565.500" y="399" font-size="7" fill="#444" textLength="27" lengthAdjust="spacingAndGlyphs">Nuageux</text>
<path d="M604 398l3-3 3 3" fill="none" stroke="#444" stroke-width=".8"/>
<rect x="615" y="393" width="5" height="6" fill="#444"/><rect x="617.500" y="396" width="4" height="4" fill="#2fa84f"/>
<path d="M626 394.500h1.500l2-1.500v6l-2-1.500H626z" fill="none" stroke="#444" stroke-width=".6"/><path d="M631 394q1.200 2 0 4M632.500 393q2 3 0 6" fill="none" stroke="#444" stroke-width=".5"/>
<rect x="636.500" y="392.500" width="7" height="6" fill="none" stroke="#444" stroke-width=".7"/><rect x="641.500" y="396" width="3.500" height="3.500" fill="#2b70c9"/>
<text x="655" y="398.500" font-size="5.800" fill="#444" text-anchor="middle">FRA</text>
<text x="679" y="394.500" font-size="5.500" fill="#444" text-anchor="middle">20:24</text><text x="679" y="402" font-size="5.500" fill="#444" text-anchor="middle">16.03.2026</text>
<path d="M701 391h7.500v6.500h-4l-1.500 2v-2h-2z" fill="#222"/><circle cx="708" cy="399.500" r="2.500" fill="#dad6d2" stroke="#333" stroke-width=".4"/><text x="708" y="401" font-size="4" fill="#222" text-anchor="middle">1</text>
</svg>
</body></html>
